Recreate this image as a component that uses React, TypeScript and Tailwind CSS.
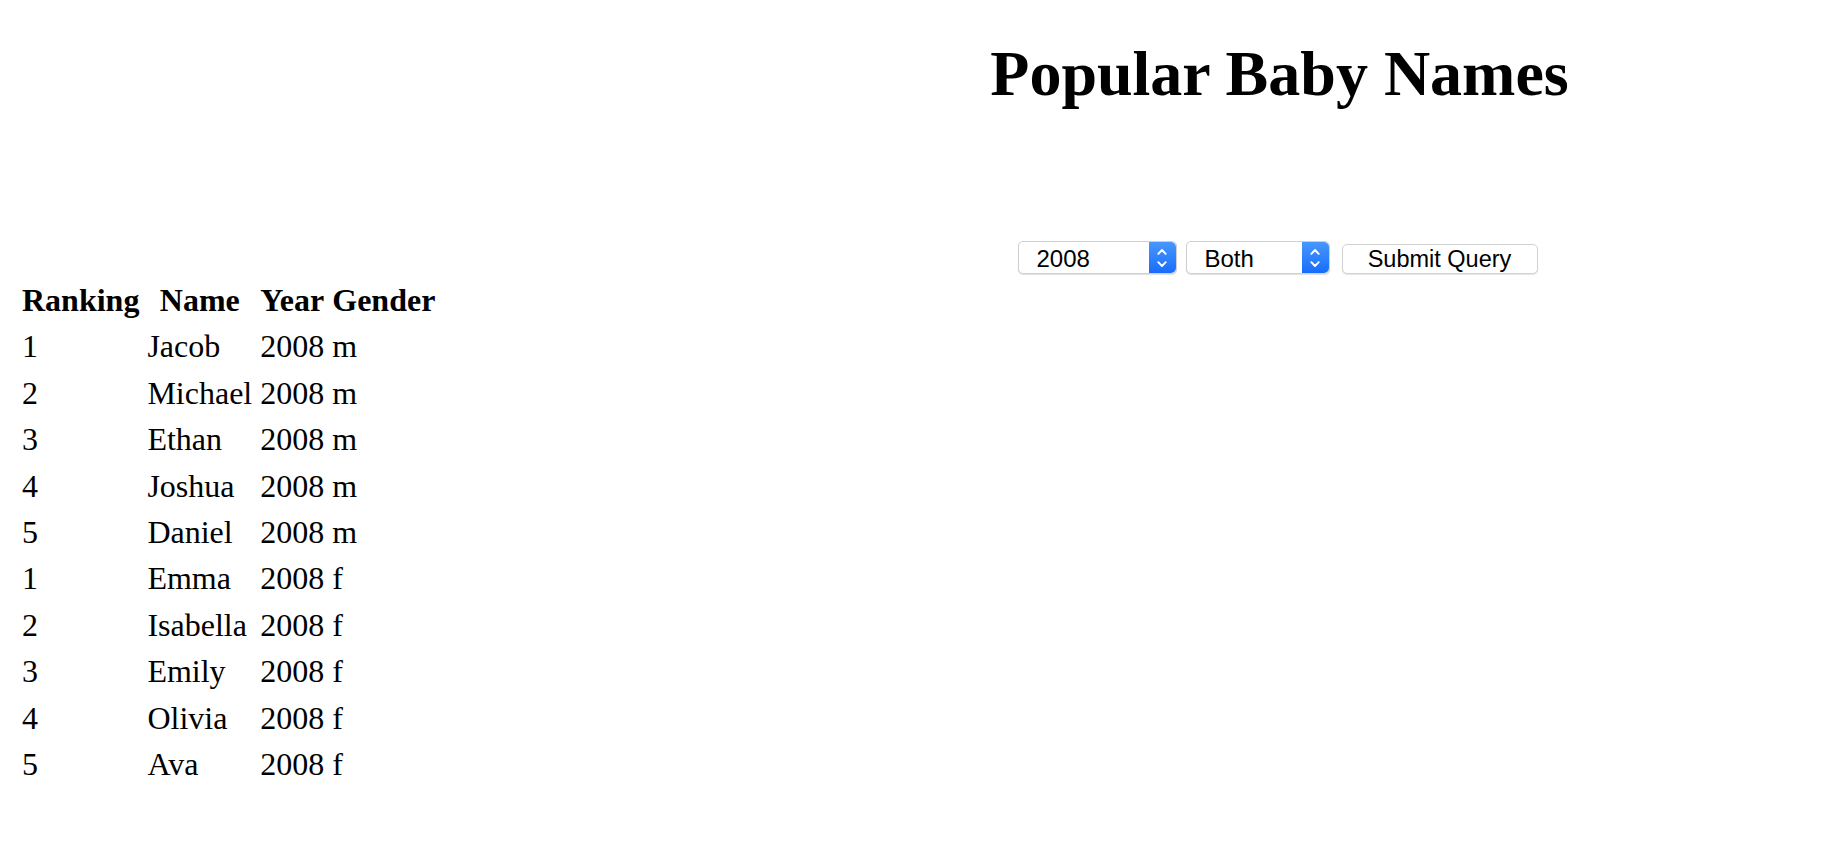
import { ReactNode } from "react";

const rows = [
  { rank: 1, name: "Jacob", year: 2008, gender: "m" },
  { rank: 2, name: "Michael", year: 2008, gender: "m" },
  { rank: 3, name: "Ethan", year: 2008, gender: "m" },
  { rank: 4, name: "Joshua", year: 2008, gender: "m" },
  { rank: 5, name: "Daniel", year: 2008, gender: "m" },
  { rank: 1, name: "Emma", year: 2008, gender: "f" },
  { rank: 2, name: "Isabella", year: 2008, gender: "f" },
  { rank: 3, name: "Emily", year: 2008, gender: "f" },
  { rank: 4, name: "Olivia", year: 2008, gender: "f" },
  { rank: 5, name: "Ava", year: 2008, gender: "f" },
];

function Stepper() {
  return (
    <div className="w-[27px] self-stretch flex items-center justify-center rounded-r-[5px] bg-gradient-to-b from-[#4797fd] to-[#176cfb]">
      <svg width="10" height="22" viewBox="0 0 10 22" fill="none">
        <path
          d="M1.3 6.8 L5 3 L8.7 6.8"
          stroke="white"
          strokeWidth="1.9"
          strokeLinecap="round"
          strokeLinejoin="round"
        />
        <path
          d="M1.3 15.2 L5 19 L8.7 15.2"
          stroke="white"
          strokeWidth="1.9"
          strokeLinecap="round"
          strokeLinejoin="round"
        />
      </svg>
    </div>
  );
}

function FakeSelect({ value, width }: { value: string; width: string }) {
  return (
    <div
      className={`${width} h-[33px] flex items-stretch bg-white border border-[#cfcfcf] rounded-[5px] shadow-[0_1px_1px_rgba(0,0,0,0.12)]`}
    >
      <div className="flex-1 flex items-center pl-[18px] pt-[2px] text-[24px] text-black">
        {value}
      </div>
      <Stepper />
    </div>
  );
}

function Th({ children }: { children: ReactNode }) {
  return (
    <th className="px-[3px] py-[4px] leading-[36.4px] font-bold text-center">
      {children}
    </th>
  );
}

function Td({ children }: { children: ReactNode }) {
  return (
    <td className="px-[3px] py-[4px] leading-[36.4px] text-left">
      {children}
    </td>
  );
}

export default function App() {
  return (
    <div className="w-[1822px] h-[858px] bg-white text-black overflow-hidden">
      <div className="ml-[737px] w-[1085px] flex flex-col items-center">
        <h1
          className="mt-[37px] text-[64px] leading-[74px] font-bold"
          style={{ fontFamily: '"Liberation Serif", serif' }}
        >
          Popular Baby Names
        </h1>
        <form
          className="mt-[130px] pr-[4px] flex items-end"
          style={{ fontFamily: '"Liberation Sans", Arial, sans-serif' }}
          onSubmit={(e) => e.preventDefault()}
        >
          <FakeSelect value="2008" width="w-[159px]" />
          <div className="ml-[9px]">
            <FakeSelect value="Both" width="w-[144px]" />
          </div>
          <button
            type="submit"
            className="ml-[12px] w-[196px] h-[30px] pt-[2px] bg-white border border-[#d2d2d2] rounded-[5px] shadow-[0_1px_1px_rgba(0,0,0,0.1)] text-[23.5px] leading-none text-black flex items-center justify-center"
          >
            Submit Query
          </button>
        </form>
      </div>

      <table
        className="ml-[17px] mt-[2px] border-separate border-spacing-[2px] text-[32px]"
        style={{ fontFamily: '"Liberation Serif", serif' }}
      >
        <thead>
          <tr>
            <Th>Ranking</Th>
            <Th>Name</Th>
            <Th>Year</Th>
            <Th>Gender</Th>
          </tr>
        </thead>
        <tbody>
          {rows.map((r, i) => (
            <tr key={i}>
              <Td>{r.rank}</Td>
              <Td>{r.name}</Td>
              <Td>{r.year}</Td>
              <Td>{r.gender}</Td>
            </tr>
          ))}
        </tbody>
      </table>
    </div>
  );
}
